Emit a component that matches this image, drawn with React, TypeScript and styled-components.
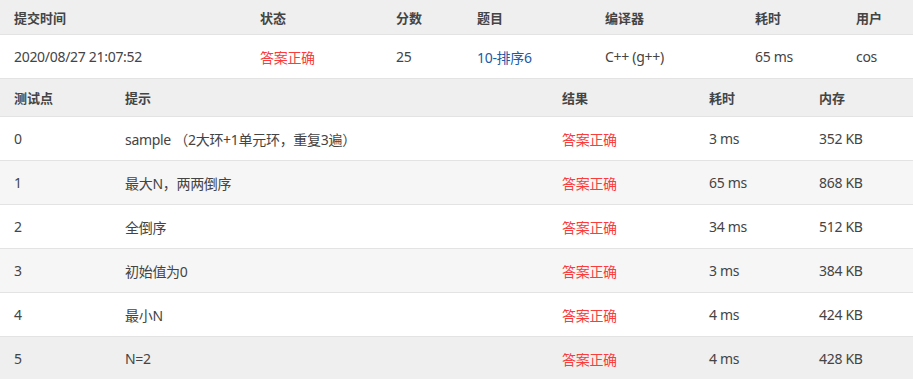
import styled, { createGlobalStyle } from "styled-components";

const GlobalStyle = createGlobalStyle`
    html, body {
        margin: 0;
        padding: 0;
        background: #fff;
    }
    body {
        font-family: "Noto Sans", "Noto Sans CJK SC", sans-serif;
        font-size: 14px;
        color: #444;
    }
`;

const Table = styled.table`
    width: 913px;
    border-collapse: collapse;
    table-layout: fixed;
`;

const HeadCell = styled.th<{ $h: number }>`
    height: ${props => props.$h}px;
    padding: 0 14px;
    text-align: left;
    font-size: 13px;
    font-weight: 700;
    color: #444;
    background: #efefef;
    border-bottom: 1px solid #e3e3e3;
    white-space: nowrap;
`;

const Row = styled.tr<{ $bg: string }>`
    background: ${props => props.$bg};
`;

const Cell = styled.td`
    height: 43px;
    padding: 0 14px;
    letter-spacing: -0.3px;
    border-bottom: 1px solid #e3e3e3;
    white-space: nowrap;
`;

const Status = styled.span`
    color: #fa3c3c;
`;

const ProblemLink = styled.a`
    color: #2159a6;
    text-decoration: none;
`;

interface Case {
    id: number;
    hint: string;
    time: string;
    mem: string;
}

const cases: Case[] = [
    { id: 0, hint: "sample （2大环+1单元环，重复3遍）", time: "3 ms", mem: "352 KB" },
    { id: 1, hint: "最大N，两两倒序", time: "65 ms", mem: "868 KB" },
    { id: 2, hint: "全倒序", time: "34 ms", mem: "512 KB" },
    { id: 3, hint: "初始值为0", time: "3 ms", mem: "384 KB" },
    { id: 4, hint: "最小N", time: "4 ms", mem: "424 KB" },
    { id: 5, hint: "N=2", time: "4 ms", mem: "428 KB" },
];

// last row is the hovered one in the screenshot
const rowBg = (i: number) => {
    if (i === cases.length - 1) return "#efefef";
    return i % 2 === 1 ? "#f6f6f6" : "#ffffff";
};

const App = () => {
    return (
        <>
            <GlobalStyle />
            <Table>
                <colgroup>
                    <col style={{ width: 246 }} />
                    <col style={{ width: 136 }} />
                    <col style={{ width: 81 }} />
                    <col style={{ width: 128 }} />
                    <col style={{ width: 150 }} />
                    <col style={{ width: 101 }} />
                    <col />
                </colgroup>
                <thead>
                    <tr>
                        <HeadCell $h={34}>提交时间</HeadCell>
                        <HeadCell $h={34}>状态</HeadCell>
                        <HeadCell $h={34}>分数</HeadCell>
                        <HeadCell $h={34}>题目</HeadCell>
                        <HeadCell $h={34}>编译器</HeadCell>
                        <HeadCell $h={34}>耗时</HeadCell>
                        <HeadCell $h={34}>用户</HeadCell>
                    </tr>
                </thead>
                <tbody>
                    <Row $bg="#ffffff">
                        <Cell>2020/08/27 21:07:52</Cell>
                        <Cell><Status>答案正确</Status></Cell>
                        <Cell>25</Cell>
                        <Cell><ProblemLink href="#">10-排序6</ProblemLink></Cell>
                        <Cell>C++ (g++)</Cell>
                        <Cell>65 ms</Cell>
                        <Cell>cos</Cell>
                    </Row>
                </tbody>
            </Table>
            <Table>
                <colgroup>
                    <col style={{ width: 111 }} />
                    <col style={{ width: 437 }} />
                    <col style={{ width: 147 }} />
                    <col style={{ width: 110 }} />
                    <col />
                </colgroup>
                <thead>
                    <tr>
                        <HeadCell $h={37}>测试点</HeadCell>
                        <HeadCell $h={37}>提示</HeadCell>
                        <HeadCell $h={37}>结果</HeadCell>
                        <HeadCell $h={37}>耗时</HeadCell>
                        <HeadCell $h={37}>内存</HeadCell>
                    </tr>
                </thead>
                <tbody>
                    {cases.map((c, i) => (
                        <Row key={c.id} $bg={rowBg(i)}>
                            <Cell>{c.id}</Cell>
                            <Cell>{c.hint}</Cell>
                            <Cell><Status>答案正确</Status></Cell>
                            <Cell>{c.time}</Cell>
                            <Cell>{c.mem}</Cell>
                        </Row>
                    ))}
                </tbody>
            </Table>
        </>
    );
};

export default App;
